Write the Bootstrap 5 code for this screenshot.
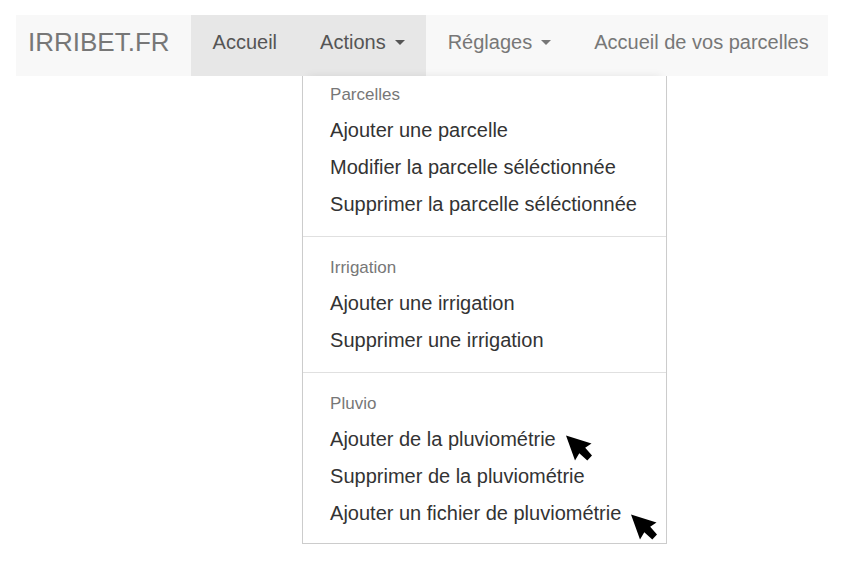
<!DOCTYPE html>
<html lang="fr">
<head>
<meta charset="utf-8">
<meta name="viewport" content="width=device-width, initial-scale=1">
<title>IRRIBET.FR</title>
<link rel="stylesheet" href="https://cdn.jsdelivr.net/npm/bootstrap@5.3.0/dist/css/bootstrap.min.css">
<style>
body { font-family: "Liberation Sans", Arial, sans-serif; background: #fff; color: #333; padding: 15px 13px 0 16px; }
.site-bar { background: #f8f8f8; }
.site-bar .navbar-brand { font-size: 26px; line-height: 28px; padding: 13px 21px 20px 12px; color: #777; }
.site-bar .nav-link { font-size: 20px; line-height: 28px; padding: 13px 21px 20px 22px !important; color: #777; white-space: nowrap; }
.site-bar .nav-link.active, .site-bar .nav-link.show { background: #e7e7e7; color: #555; }
.site-bar .dropdown-toggle::after { margin-left: 9px; vertical-align: 4px; border-width: 5px 5px 0; }
.site-bar .actions-menu { left: 4px; top: 100%; margin: 0; padding: 1px 0 11px; border: 1px solid #ccc; border-top: 0; border-radius: 0; box-shadow: 0 -6px 8px -6px rgba(0, 0, 0, .08); }
.actions-menu .dropdown-header { font-size: 17px; line-height: 35px; padding: 0 27px; color: #777; }
.actions-menu .dropdown-item { font-size: 20px; line-height: 37px; padding: 0 29px 0 27px; color: #333; }
.actions-menu .dropdown-divider { margin: 13px 0; border-color: #e0e0e0; opacity: 1; }
.pointer { left: 100%; top: 14px; margin-left: 10px; width: 26px; height: 26px; pointer-events: none; }
.pointer-low { top: 19px; }
</style>
</head>
<body class="min-vh-100">
<nav class="navbar navbar-expand site-bar p-0" aria-label="Navigation principale">
  <a class="navbar-brand m-0" href="#">IRRIBET.FR</a>
  <ul class="navbar-nav">
    <li class="nav-item"><a class="nav-link active" href="#">Accueil</a></li>
    <li class="nav-item dropdown">
      <a class="nav-link dropdown-toggle show" href="#" role="button" data-bs-toggle="dropdown" aria-expanded="true">Actions</a>
      <ul class="dropdown-menu actions-menu show">
        <li><h6 class="dropdown-header">Parcelles</h6></li>
        <li><a class="dropdown-item" href="#">Ajouter une parcelle</a></li>
        <li><a class="dropdown-item" href="#">Modifier la parcelle séléctionnée</a></li>
        <li><a class="dropdown-item" href="#">Supprimer la parcelle séléctionnée</a></li>
        <li><hr class="dropdown-divider"></li>
        <li><h6 class="dropdown-header">Irrigation</h6></li>
        <li><a class="dropdown-item" href="#">Ajouter une irrigation</a></li>
        <li><a class="dropdown-item" href="#">Supprimer une irrigation</a></li>
        <li><hr class="dropdown-divider"></li>
        <li><h6 class="dropdown-header">Pluvio</h6></li>
        <li><a class="dropdown-item" href="#"><span class="d-inline-block position-relative">Ajouter de la pluviométrie<svg class="pointer position-absolute" viewBox="0 0 26 26" aria-hidden="true"><path d="M0 .5 25.5 8.5 19.2 12.8 26 20.5 21.3 25.5 13.3 18.2 9 25.5Z"/></svg></span></a></li>
        <li><a class="dropdown-item" href="#">Supprimer de la pluviométrie</a></li>
        <li><a class="dropdown-item" href="#"><span class="d-inline-block position-relative">Ajouter un fichier de pluviométrie<svg class="pointer pointer-low position-absolute" viewBox="0 0 26 26" aria-hidden="true"><path d="M0 .5 25.5 8.5 19.2 12.8 26 20.5 21.3 25.5 13.3 18.2 9 25.5Z"/></svg></span></a></li>
      </ul>
    </li>
    <li class="nav-item"><a class="nav-link dropdown-toggle" href="#" role="button" aria-expanded="false">Réglages</a></li>
    <li class="nav-item"><a class="nav-link" href="#">Accueil de vos parcelles</a></li>
  </ul>
</nav>
<script src="https://cdn.jsdelivr.net/npm/bootstrap@5.3.0/dist/js/bootstrap.bundle.min.js"></script>
</body>
</html>
